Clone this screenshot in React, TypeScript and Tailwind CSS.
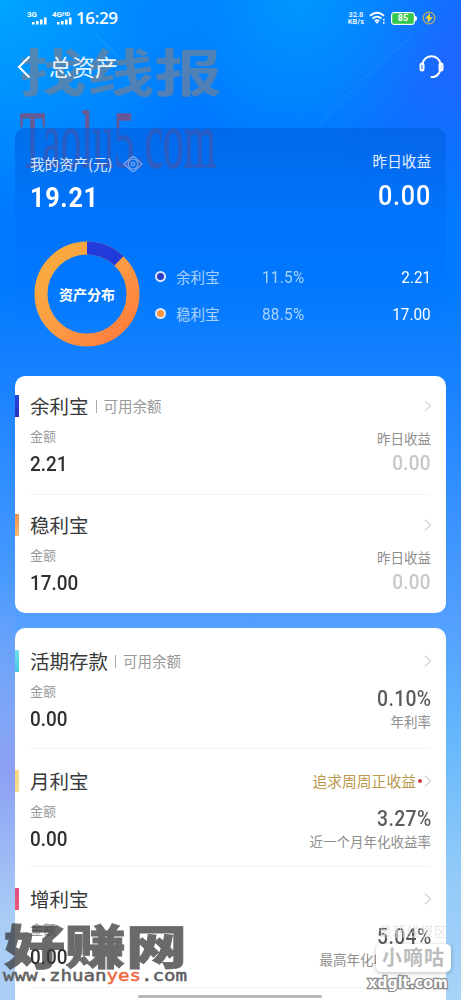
import type { ReactNode } from "react";

type Product = {
  name: string;
  note?: string;
  amount: string;
  bar: string;
  tag?: string;
  label: string;
  value: string;
  box?: string;
};

const balances: Product[] = [
  { name: "余利宝", note: "可用余额", amount: "2.21", bar: "from-[#2545d8] to-[#2b2fb8]", label: "昨日收益", value: "0.00" },
  { name: "稳利宝", amount: "17.00", bar: "from-[#f0914f] to-[#f8b872]", label: "昨日收益", value: "0.00" },
];

const deposits: Product[] = [
  { name: "活期存款", note: "可用余额", amount: "0.00", bar: "from-[#6fe0ea] to-[#48c6e2]", label: "年利率", value: "0.10%", box: "h-[121px] pt-[19px]" },
  { name: "月利宝", amount: "0.00", bar: "from-[#f6d878] to-[#f5df98]", tag: "追求周周正收益", label: "近一个月年化收益率", value: "3.27%", box: "h-[118px] pt-[18px]" },
  { name: "增利宝", amount: "0.00", bar: "from-[#e04a86] to-[#ef5a70]", label: "最高年化收益率", value: "5.04%", box: "h-[121px] pt-[18px]" },
];

const shares = [
  { name: "余利宝", percent: "11.5%", amount: "2.21", dot: "bg-[#2c3cc4]" },
  { name: "稳利宝", percent: "88.5%", amount: "17.00", dot: "bg-[#ff9438]" },
];

function Num({ children, className = "" }: { children: ReactNode; className?: string }) {
  return <span className={`inline-block scale-x-90 font-['Roboto'] ${className}`}>{children}</span>;
}

function Chevron() {
  return (
    <svg width="8" height="12" viewBox="0 0 8 12" fill="none" stroke="#d6d6d6" strokeWidth="1.2" className="-mr-px shrink-0">
      <path d="M1 .8 6.5 6 1 11.2" />
    </svg>
  );
}

function Signal({ label, children }: { label: string; children?: ReactNode }) {
  return (
    <svg width="21" height="16" viewBox="0 0 21 16" fill="#fff" className="overflow-visible">
      <text x="0" y="7" fontSize="8" fontWeight="700" fontFamily="Roboto">
        {label}
        {children}
      </text>
      <rect x="5" y="12" width="2.6" height="2.5" />
      <rect x="9" y="11" width="2.6" height="3.5" />
      <rect x="13" y="9.5" width="2.6" height="5" />
      <rect x="17" y="7.5" width="2.6" height="7" />
    </svg>
  );
}

function StatusBar() {
  return (
    <div className="flex h-9 items-center pl-[27px] pr-[25px] text-white">
      <div className="flex gap-1">
        <Signal label="3G" />
        <Signal label="4G">
          <tspan fontSize="6" dy="-1">HD</tspan>
        </Signal>
      </div>
      <span className="ml-[3px] font-['Open_Sans'] text-[17px] font-semibold tracking-[-0.4px]">16:29</span>
      <div className="ml-auto flex items-center">
        <div className="text-center font-['Roboto'] text-[7.5px] font-medium leading-[7px]">
          <div>32.8</div>
          <div>KB/s</div>
        </div>
        <svg width="18" height="14" viewBox="0 0 18 14" fill="none" stroke="#fff" strokeWidth="1.8" className="ml-[5px]">
          <path d="M1 4.8q7-6 14 0M3.5 7.6q4.500-4 9 0M5.800 10.200q2.200-2 4.400 0" />
          <path d="M6 10.500 8 12.800 10 10.500Z" fill="#fff" stroke="none" />
          <path d="M14.800 8v1.800M14.800 11v1.800" strokeWidth="1.500" />
        </svg>
        <div className="ml-[4px] flex h-[13px] w-6 items-center justify-center rounded-[3px] border border-white bg-[#35c84b] font-['Roboto'] text-[9px] font-bold leading-none ring-1 ring-inset ring-white/20">
          85
        </div>
        <div className="h-[5px] w-[2px] rounded-r bg-white" />
        <svg width="14" height="14" viewBox="0 0 14 14" className="ml-[5px]">
          <circle cx="7" cy="7" r="5.800" fill="none" stroke="#b7ad6a" strokeWidth="1.300" />
          <path d="M8 2 3 7.600h3L5.500 12 11 6.200H7.800Z" fill="#ffd42b" />
        </svg>
      </div>
    </div>
  );
}

function Donut() {
  const length = 2 * Math.PI * 46;
  return (
    <div className="relative size-[106px] shrink-0">
      <svg width="106" height="106" viewBox="0 0 106 106" fill="none" strokeWidth="13">
        <defs>
          <linearGradient id="orange" x1="0" y1="0" x2="1" y2="1">
            <stop offset="0" stopColor="#f8ad3c" />
            <stop offset=".45" stopColor="#fba044" />
            <stop offset="1" stopColor="#ff783c" />
          </linearGradient>
          <linearGradient id="indigo" x1="0" y1="0" x2="1" y2="0">
            <stop stopColor="#2932bb" />
            <stop offset="1" stopColor="#233bdd" />
          </linearGradient>
        </defs>
        <circle cx="53" cy="53" r="46" stroke="url(#orange)" />
        <circle cx="53" cy="53" r="46" stroke="url(#indigo)" strokeDasharray={`${length * 0.122} ${length}`} transform="rotate(-90 53 53)" />
      </svg>
      <span className="absolute inset-0 flex items-center justify-center text-[14px] font-bold">资产分布</span>
    </div>
  );
}

function Summary() {
  return (
    <section className="mx-[15px] mt-[31px] h-[248px] rounded-[10px] bg-linear-to-b from-[#0060df]/65 via-[#006cf5]/45 via-35% to-[#007aff]/0 to-80% px-[15px] pt-[22px] text-white">
      <div className="flex justify-between">
        <div>
          <div className="mt-[3px] flex h-[22px] items-center text-[14.500px] text-white/85">
            我的资产(元)
            <svg width="20" height="16" viewBox="0 0 20 16" fill="none" stroke="#76a6ee" strokeWidth="1.300" className="ml-[11px]">
              <path d="M1 8 8 1.500q2-1.500 4 0L19 8l-7 6.500q-2 1.500-4 0Z" />
              <circle cx="10" cy="8" r="4.800" />
              <circle cx="10" cy="8" r="1.700" />
            </svg>
          </div>
          <Num className="mt-[7px] origin-left text-[28px] font-bold leading-8 tracking-[0.800px]">19.21</Num>
        </div>
        <div className="text-right">
          <div className="h-[22px] text-[14.600px] leading-[22px] text-white/90">昨日收益</div>
          <Num className="mt-[8px] origin-right text-[28px] font-medium leading-8 tracking-[0.900px]">0.00</Num>
        </div>
      </div>
      <div className="mt-[27px] flex pl-[4px]">
        <Donut />
        <div className="ml-[15px] flex flex-1 flex-col pt-[17px]">
          {shares.map((s) => (
            <div key={s.name} className="flex h-[37px] items-center text-[14.500px]">
              <i className={`size-[11px] rounded-full border-2 border-[#dce8ff] ${s.dot}`} />
              <span className="ml-[10px] w-[86px] text-white/65">{s.name}</span>
              <Num className="mt-[2px] origin-left text-[17px] tracking-[0.300px] text-white/65">{s.percent}</Num>
              <Num className="mt-[2px] ml-auto origin-right text-[17px]">{s.amount}</Num>
            </div>
          ))}
        </div>
      </div>
    </section>
  );
}

function Heading({ item }: { item: Product }) {
  return (
    <div className="flex h-7 items-center">
      <i className={`-ml-[15px] mr-[11px] h-[22px] w-1 bg-linear-to-b ${item.bar}`} />
      <h2 className="text-[19.500px] text-[#383838]">{item.name}</h2>
      {item.note && (
        <span className="ml-[7px] flex items-center text-[14.500px] text-[#999]">
          <i className="mr-[7px] h-[13px] w-px bg-[#aaa]" />
          {item.note}
        </span>
      )}
      <div className="ml-auto flex items-center text-[14.800px] text-[#bd974e]">
        {item.tag}
        {item.tag && <i className="ml-[2px] mr-[2px] size-1 rounded-full bg-[#d93b43]" />}
        <Chevron />
      </div>
    </div>
  );
}

function Amount({ value }: { value: string }) {
  return (
    <div>
      <div className="h-[18px] text-[13px] leading-[18px] text-[#999]">金额</div>
      <Num className="mt-[7px] origin-left text-[21px] font-medium leading-6 text-[#303030]">{value}</Num>
    </div>
  );
}

function Balances() {
  return (
    <section className="mx-[15px] rounded-[10px] bg-white px-[15px]">
      {balances.map((item) => (
        <div key={item.name} className="h-[118.500px] border-b border-[#f4f4f4] pt-4 last:border-0">
          <Heading item={item} />
          <div className="mt-[7px] flex justify-between">
            <Amount value={item.amount} />
            <div className="text-right">
              <div className="mt-[2px] h-[18px] text-[13.500px] leading-[18px] text-[#8e8e8e]">{item.label}</div>
              <Num className="mt-1 origin-right text-[21px] font-medium leading-6 tracking-[0.300px] text-[#c8c8c8]">{item.value}</Num>
            </div>
          </div>
        </div>
      ))}
    </section>
  );
}

function Deposits() {
  return (
    <section className="mx-[15px] mt-[15px] h-[390px] rounded-t-[10px] bg-white px-[15px]">
      {deposits.map((item) => (
        <div key={item.name} className={`border-b border-[#f4f4f4] ${item.box}`}>
          <Heading item={item} />
          <div className="mt-[7px] flex justify-between">
            <Amount value={item.amount} />
            <div className="text-right">
              <Num className="mt-[5px] block! origin-right text-[21.500px] font-medium leading-6 tracking-[0.400px] text-[#5b5b5b]">{item.value}</Num>
              <div className={`mt-px h-[18px] text-[13.500px] leading-[18px] text-[#8e8e8e] ${item.name === "增利宝" ? "pr-[17px]" : ""}`}>{item.label}</div>
            </div>
          </div>
        </div>
      ))}
    </section>
  );
}

function HeaderStamp() {
  return (
    <svg width="461" height="190" viewBox="0 0 461 190" className="pointer-events-none absolute top-0 left-0 -z-10">
      <text x="19" y="92" fontSize="51" fontWeight="700" fill="#6f8199" opacity=".72" textLength="203" lengthAdjust="spacingAndGlyphs" fontFamily="'Noto Sans CJK SC', sans-serif">找线报</text>
      <text x="20" y="167" fontSize="81" fill="#a0405c" stroke="#a0405c" strokeWidth="1.500" opacity=".65" textLength="196" lengthAdjust="spacingAndGlyphs" fontFamily="'Liberation Serif', serif">Taolu5.com</text>
    </svg>
  );
}

function FooterStamps() {
  return (
    <svg width="461" height="90" viewBox="0 910 461 90" className="pointer-events-none absolute bottom-0 left-0 overflow-visible">
      <text x="4" y="964" fontSize="47" fontWeight="900" fill="#3c3c3c" stroke="#3c3c3c" strokeWidth=".8" opacity=".76" textLength="183" lengthAdjust="spacingAndGlyphs" fontFamily="'Noto Sans CJK SC', sans-serif">好赚网</text>
      <text x="3" y="981" fontSize="16" fill="#606060" stroke="#606060" strokeWidth=".5" textLength="184" lengthAdjust="spacingAndGlyphs" fontFamily="'DejaVu Sans Mono', monospace">
        www.zhuan<tspan fill="#f06c43" stroke="#f06c43">yes</tspan>.com
      </text>
      <text x="379" y="936" fontSize="13" fill="#dedede" opacity=".8" textLength="68" fontFamily="'Noto Sans CJK SC', sans-serif">最新线报区</text>
      <rect x="376" y="944" width="75" height="28" rx="5" fill="#fff" className="drop-shadow-[0_1px_2px_#0004]" />
      <text x="382" y="965" fontSize="20" fontWeight="700" fill="#bdbdbd" textLength="62" fontFamily="'Noto Sans CJK SC', sans-serif">小嘀咕</text>
      <text x="368" y="988" fontSize="15" fontWeight="700" fill="#fff" stroke="#8a8a8a" strokeWidth="2.500" paintOrder="stroke" textLength="80" lengthAdjust="spacingAndGlyphs" fontFamily="'DejaVu Sans', sans-serif">xdglt.com</text>
    </svg>
  );
}

export default function App() {
  return (
    <main className="relative isolate h-[1000px] w-[461px] overflow-hidden bg-[#007aff] font-['Noto_Sans_CJK_SC',sans-serif]">
      <div className="absolute inset-0 -z-10 bg-[radial-gradient(circle_at_0_0,#00a5ff_0,transparent_210px),radial-gradient(circle_at_300px_0,#0096ff_0,transparent_150px),radial-gradient(circle_at_461px_60px,#1f66ff_0,transparent_160px),linear-gradient(180deg,#007aff_0,#007aff_28%,#1680ff_37%,#529fff_62%,#63b6fb_73%,#91caf9_87%,#a8d3f8_100%)]" />
      <div className="absolute inset-y-0 left-0 -z-10 w-[15px] bg-linear-to-b from-transparent from-58% via-[#8c9ff4] via-77% to-[#a9cdf5] to-92%" />
      <svg width="461" height="130" viewBox="0 0 461 130" className="absolute top-0 left-0 -z-10" fill="none">
        <path d="M318 126Q360 79 410 38" stroke="#39a2ff" strokeOpacity=".35" />
        <path d="M95 34 119 57" stroke="#39a2ff" strokeOpacity=".25" strokeWidth="2" />
      </svg>
      <HeaderStamp />
      <StatusBar />
      <header className="flex h-[61px] items-center pl-[17px] pr-[17px] text-white">
        <svg width="14" height="24" viewBox="0 0 14 24" fill="none" stroke="#fff" strokeWidth="2">
          <path d="M12.500 1.500 2 12l10.500 10.500" />
        </svg>
        <h1 className="ml-[18px] text-[23px] font-normal text-white/90">总资产</h1>
        <svg width="25" height="25" viewBox="0 0 25 25" fill="none" stroke="#fff" strokeWidth="2" className="ml-auto">
          <path d="M3.500 9.500A9.200 9.200 0 0 1 21.500 9.500V15q-1 6-6.500 8h-2.500" strokeLinecap="round" />
          <rect x="1.500" y="9.500" width="3" height="7" rx="1.500" />
          <rect x="20.500" y="9.500" width="3" height="7" rx="1.500" />
        </svg>
      </header>
      <Summary />
      <Balances />
      <Deposits />
      <FooterStamps />
      <div className="absolute bottom-[2px] left-[138px] h-[3px] w-[184px] rounded bg-[#b9b9b9]" />
    </main>
  );
}
